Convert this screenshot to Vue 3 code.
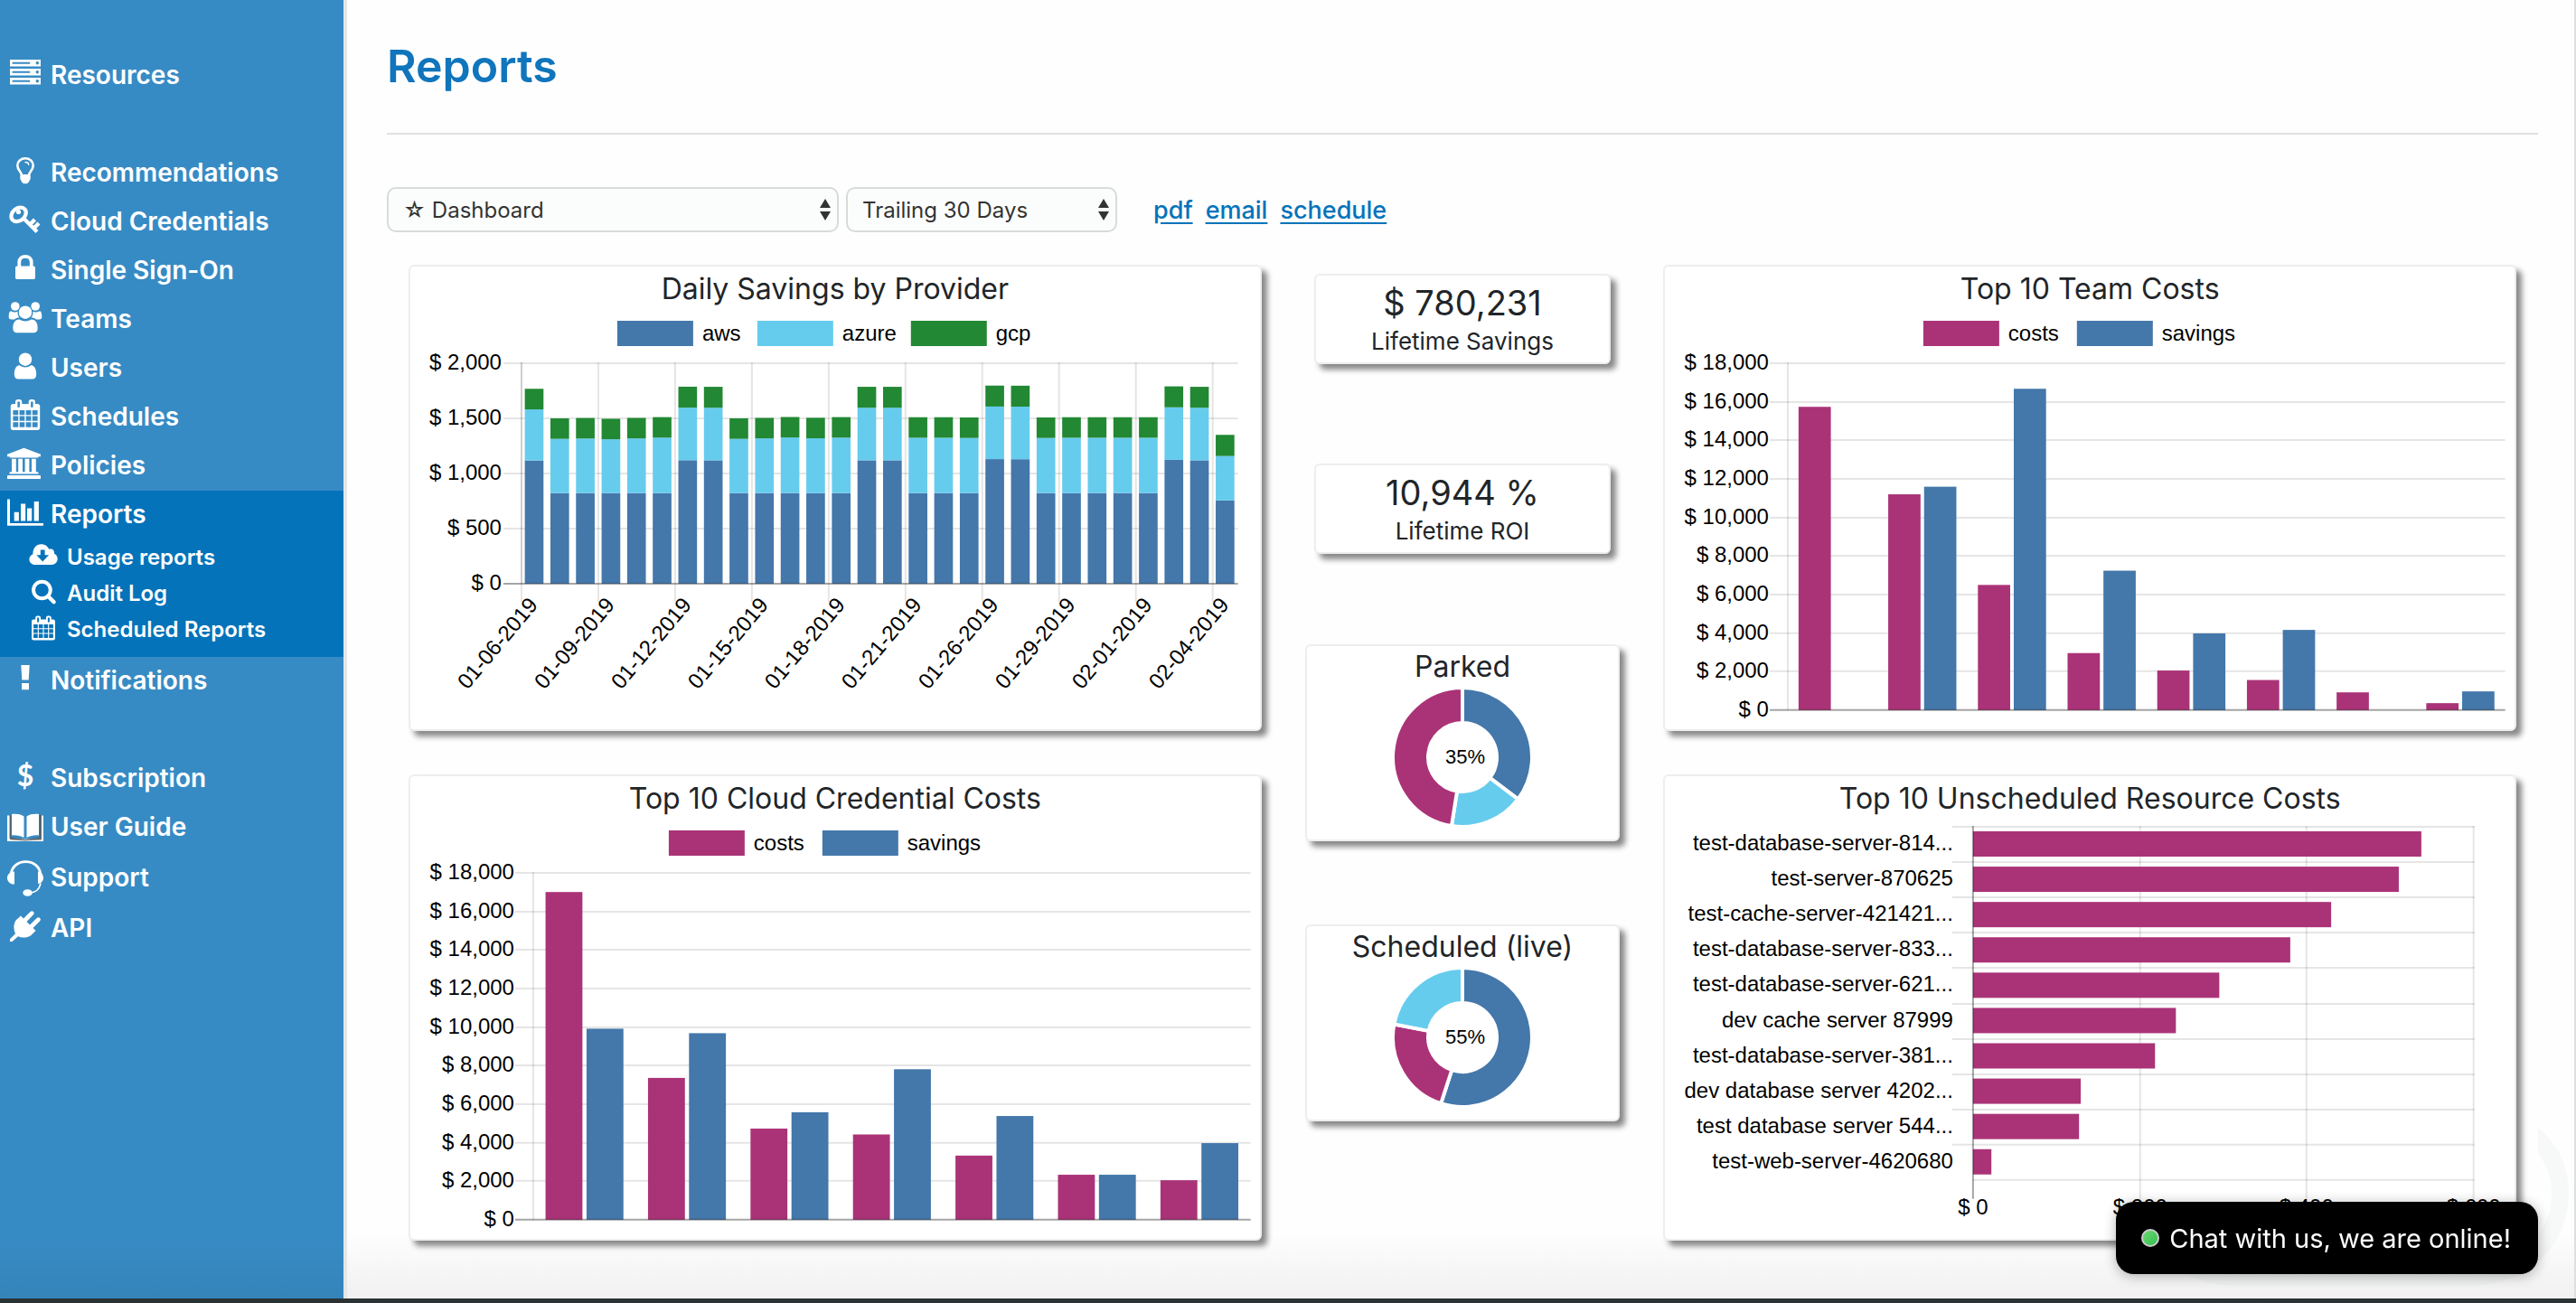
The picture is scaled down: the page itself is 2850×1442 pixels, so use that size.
<script setup>
import { ref } from 'vue'

const BLUE = '#4477aa'
const CYAN = '#66ccee'
const GREEN = '#228833'
const MAGENTA = '#aa3377'

const groups = [
  [{ icon: 'server', label: 'Resources' }],
  [
    { icon: 'bulb', label: 'Recommendations' },
    { icon: 'key', label: 'Cloud Credentials' },
    { icon: 'lock', label: 'Single Sign-On' },
    { icon: 'users', label: 'Teams' },
    { icon: 'user', label: 'Users' },
    { icon: 'calendar', label: 'Schedules' },
    { icon: 'bank', label: 'Policies' },
    {
      icon: 'chart',
      label: 'Reports',
      children: [
        { icon: 'cloud', label: 'Usage reports' },
        { icon: 'search', label: 'Audit Log' },
        { icon: 'calendar', label: 'Scheduled Reports' }
      ]
    },
    { icon: 'bang', label: 'Notifications' }
  ],
  [
    { icon: 'dollar', label: 'Subscription' },
    { icon: 'book', label: 'User Guide' },
    { icon: 'headset', label: 'Support', tall: true },
    { icon: 'plug', label: 'API' }
  ]
]

const icons = {
  server: `<path fill-rule="evenodd" d="M3 5h34v7.4H3zM5.6 7.7v2h19.6v-2zM33.3 7a1.7 1.7 0 1 0 .01 0zM3 15h34v7.4H3zM5.6 17.7v2h19.6v-2zM33.3 17a1.7 1.7 0 1 0 .01 0zM3 25h34v7.4H3zM5.6 27.7v2h19.6v-2zM33.3 27a1.7 1.7 0 1 0 .01 0z"/>`,
  bulb: `<path fill="none" stroke="#fff" stroke-width="2.6" d="M16 25c0-4-4.7-5.500-4.700-11 0-4.600 3.900-7.700 8.700-7.700s8.700 3.100 8.700 7.700c0 5.500-4.700 7-4.700 11"/><path fill="none" stroke="#fff" stroke-width="1.400" stroke-linecap="round" d="M20 10.500c2 0 3.700 1 3.700 2.700"/><path d="M14.700 24h10.600c.8 2.500.6 6-1 7.500-1 2.300-2.500 2.800-4.300 2.800s-3.300-.5-4.300-2.800c-1.600-1.500-1.800-5-1-7.500z"/>`,
  key: `<ellipse cx="12.600" cy="14.400" rx="9" ry="6.800" transform="rotate(-40 12.600 14.400)" fill="none" stroke="#fff" stroke-width="4.200"/><circle cx="12.500" cy="11.500" r="2.600"/><path fill="none" stroke="#fff" stroke-width="4.200" stroke-linecap="square" d="M19 19.500 31.500 32M26 24.500l3-3M30.500 28.500l3-3"/>`,
  lock: `<rect x="9" y="17.500" width="22" height="14.500" rx="1.800"/><path fill="none" stroke="#fff" stroke-width="3.800" d="M13.300 19v-6c0-3.700 3-6.200 6.700-6.200s6.700 2.500 6.700 6.200v6"/>`,
  users: `<circle cx="8.800" cy="8" r="4.800"/><circle cx="31.200" cy="8" r="4.800"/><path d="M4 13.200c3 1.600 5.600 1.500 7.500.6-.2 3 .7 5.200 2 6.700-2.300 0-4 .6-5.300 2H4.500c-2 0-2.800-1-2.800-2.800 0-3 .3-6 2.300-6.500zM36 13.200c-3 1.600-5.600 1.500-7.500.6.2 3-.7 5.200-2 6.700 2.300 0 4 .6 5.300 2h3.700c2 0 2.800-1 2.800-2.800 0-3-.3-6-2.300-6.500z"/><circle cx="20" cy="14.700" r="7.200"/><path d="M13.500 22.500c4 2.600 9 2.600 13 0 5.500 0 7.200 4.500 7.200 10 0 3-1.700 4.800-4.700 4.800H11c-3 0-4.700-1.800-4.700-4.800 0-5.500 1.700-10 7.200-10z"/>`,
  user: `<circle cx="20" cy="12.700" r="7.200"/><path d="M13.800 19.200c3.800 3 8.600 3 12.400 0 4.700.3 6 5.500 6 10 0 3.300-1.700 5.300-4.500 5.300H12.300c-2.800 0-4.500-2-4.500-5.300 0-4.500 1.300-9.700 6-10z"/>`,
  calendar: `<path fill-rule="evenodd" d="M6.500 8H9V5.500C9 4 10.400 3 12 3h1.500c1.600 0 2.800 1 2.800 2.500V8h7.400V5.500C23.700 4 24.900 3 26.500 3H28c1.600 0 3 1 3 2.500V8h2.500c1.600 0 2.700 1 2.700 2.500V34.500c0 1.500-1.100 2.500-2.700 2.500h-27c-1.600 0-2.700-1-2.700-2.500v-24C3.800 9 4.900 8 6.500 8zM11.400 5.500v6.300h2.500V5.500zM26.100 5.500v6.300h2.500V5.500zM6.400 15v5.200h5.800V15zm7.200 0v5.200h5.700V15zm7.100 0v5.200h5.700V15zm7.100 0v5.200h5.800V15zM6.400 21.500v5.300h5.800v-5.300zm7.200 0v5.300h5.700v-5.300zm7.100 0v5.300h5.700v-5.300zm7.100 0v5.300h5.800v-5.300zM6.400 28.200v5.500h5.800v-5.500zm7.200 0v5.500h5.700v-5.500zm7.100 0v5.500h5.700v-5.500zm7.100 0v5.500h5.800v-5.500z"/>`,
  bank: `<path d="M18.500 2.800 37 9.800v2.400h-2.400c0 1-.6 1.300-1.500 1.300H4c-.9 0-1.500-.4-1.500-1.300H0V9.800zM5 14.700h4.800v14.600h2.400V14.700H17v14.600h2.600V14.700h4.800v14.600H27V14.700h4.800v14.600h1.400c.8 0 1.300.5 1.300 1.200v1H2.500v-1c0-.7.5-1.200 1.300-1.200H5zM1.300 33h34.500c.7 0 1.200.5 1.200 1.200V37H0v-2.800C0 33.500.6 33 1.300 33z"/>`,
  chart: `<path d="M0 5.400h3v26.500h37v2.800H0zM7.700 19.800h5.200v9.700H7.700zM15 10.500h5.200v19H15zM22 15.500h5.200v14H22zM29.700 8h5.200v21.500h-5.200z"/>`,
  cloud: `<path fill-rule="evenodd" d="M8.500 32.500C4 32.500.5 29.300.5 25c0-3.500 2-6 5-7.200C5.300 9.700 10 4 17 4c5 0 9 2.600 10.700 7 4.300-1.400 8 1.200 7.300 6.200 3 1 4.600 4 4.600 7.300 0 4.500-3.500 8-8 8zM16 12v7h-5.500l8.500 9 8.500-9H22v-7z"/>`,
  search: `<circle cx="18" cy="17.500" r="11.700" fill="none" stroke="#fff" stroke-width="5"/><path stroke="#fff" stroke-width="5.500" stroke-linecap="round" d="m26.500 26 8 8"/>`,
  bang: `<path d="M15.300 5h9.400l-1 16.500h-7.400zM16 25h8v7.200h-8z"/>`,
  dollar: `<text x="20" y="31" text-anchor="middle" font-size="32" font-weight="700" font-family="Lato, sans-serif">$</text>`,
  book: `<path d="M0 9.500h2.500V35.500h17.500 17.500V9.500H40V38H0z"/><path fill="#555" d="M3 9h1.500v24.500L20 36l15.500-2.500V9H38v27.500l-18 1-16-1-1-1z" opacity=".75"/><path d="M5 8c5-.5 10 0 13.500 2.500v23.500C14 32 10 31 5 31.500zM35 8c-5-.5-10 0-13.500 2.500v23.500c4.500-2 8.500-3 13.500-2.500z"/>`,
  headset: `<path fill="none" stroke="#fff" stroke-width="2.800" d="M4 16C5 7 12 1.600 20.500 1.600S36 7 37 16"/><path d="M8 12.500v14C3.500 27 0 23.500 0 19.500S3.500 12.500 8 12.500zM34 12.500v13.500c3.500 0 6-3 6-6.500s-2.500-7-6-7z"/><path fill="none" stroke="#fff" stroke-width="1.700" d="M37 25.500c-1.500 7-5 10.300-13 10.700"/><ellipse cx="22.500" cy="36" rx="5.200" ry="3.800"/>`,
  plug: `<path d="M9.500 13.500 15 8.500l3 3 7.500-7.500c2.300-2.300 5.700.8 3.400 3.300L21.500 15l3.500 3.500 7.700-7.500c2.500-2.200 5.700 1 3.300 3.400L28.500 22l3 3-5 5c-5.500 3.700-11 2.700-14.500 1.200L5.500 37H3v-2.800l6-6c-2-4.500-2.500-9.500.5-14.700z"/>`
}

const report = ref('dashboard')
const period = ref('30')

const kpis = [
  { value: '$ 780,231', label: 'Lifetime Savings' },
  { value: '10,944 %', label: 'Lifetime ROI' }
]

const polar = (cx, cy, r, share) => {
  const a = share * 2 * Math.PI
  return `${(cx + r * Math.sin(a)).toFixed(2)} ${(cy - r * Math.cos(a)).toFixed(2)}`
}
const slice = (from, to) => {
  const large = to - from > 0.5 ? 1 : 0
  return `M${polar(77, 77, 77, from)}A77 77 0 ${large} 1 ${polar(77, 77, 77, to)}L${polar(77, 77, 38, to)}A38 38 0 ${large} 0 ${polar(77, 77, 38, from)}Z`
}
const donuts = [
  {
    title: 'Parked',
    text: '35%',
    slices: [
      { d: slice(0, 0.353), color: BLUE },
      { d: slice(0.353, 0.525), color: CYAN },
      { d: slice(0.525, 1), color: MAGENTA }
    ]
  },
  {
    title: 'Scheduled (live)',
    text: '55%',
    slices: [
      { d: slice(0, 0.55), color: BLUE },
      { d: slice(0.55, 0.78), color: MAGENTA },
      { d: slice(0.78, 1), color: CYAN }
    ]
  }
]

const money = (n) => '$ ' + n.toLocaleString('en-US')

// Daily savings: running totals of aws, aws + azure, aws + azure + gcp
const low = (total) => [822, total - 186, total]
const high = (total) => [total - 667, total - 190, total]
const days = [
  [1118, 1581, 1768], low(1500), low(1503), low(1496), low(1504), low(1511),
  high(1787), high(1786), low(1500), low(1504), low(1512), low(1505), low(1511),
  high(1786), high(1786), low(1510), low(1510), low(1508),
  high(1797), high(1796), low(1508), low(1510), low(1510), low(1510), low(1510),
  high(1790), high(1786), [755, 1158, 1350]
]
const dayWidth = 793 / days.length
const daily = {
  legend: [
    { label: 'aws', color: BLUE, x: 229 },
    { label: 'azure', color: CYAN, x: 384 },
    { label: 'gcp', color: GREEN, x: 554 }
  ],
  ticks: [2000, 1500, 1000, 500, 0].map((v, i) => ({ label: money(v), y: 57 + i * 61 })),
  bars: days.flatMap((totals, i) =>
    [0, 1, 2].map((k) => {
      const base = k ? totals[k - 1] : 0
      return {
        x: 123 + dayWidth * (i + 0.13),
        y: 301 - totals[k] * 0.122,
        w: dayWidth * 0.73,
        h: (totals[k] - base) * 0.122,
        color: [BLUE, CYAN, GREEN][k]
      }
    })
  ),
  dates: ['01-06-2019', '01-09-2019', '01-12-2019', '01-15-2019', '01-18-2019', '01-21-2019', '01-26-2019', '01-29-2019', '02-01-2019', '02-04-2019'].map(
    (label, i) => ({ label, x: Math.round(123 + i * 3 * dayWidth) })
  )
}

const paired = (title, costs, savings) => {
  const cat = 794 / costs.length
  const scale = 384 / 18000
  const column = (v, i, k) => ({
    x: 136 + cat * (i + 0.12 + k * 0.4),
    y: 441 - v * scale,
    w: cat * 0.36,
    h: v * scale,
    color: k ? BLUE : MAGENTA
  })
  return {
    title,
    bars: [...costs.map((v, i) => column(v, i, 0)), ...savings.map((v, i) => column(v, i, 1))]
  }
}
const pairTicks = Array.from({ length: 10 }, (_, i) => ({
  label: money(18000 - i * 2000),
  y: Math.round(57 + (i * 384) / 9)
}))
const pairLegend = [
  { label: 'costs', color: MAGENTA, x: 286 },
  { label: 'savings', color: BLUE, x: 456 }
]
const credentials = paired(
  'Top 10 Cloud Credential Costs',
  [17006, 7360, 4730, 4425, 3328, 2334, 2050],
  [9914, 9680, 5578, 7809, 5381, 2334, 3975]
)
const teams = paired(
  'Top 10 Team Costs',
  [15737, 11198, 6495, 2958, 2053, 1561, 920, 360],
  [0, 11592, 16674, 7235, 3980, 4160, 0, 970]
)

const resources = [
  ['test-database-server-814...', 537],
  ['test-server-870625', 510],
  ['test-cache-server-421421...', 429],
  ['test-database-server-833...', 380],
  ['test-database-server-621...', 295],
  ['dev cache server 87999', 243],
  ['test-database-server-381...', 218],
  ['dev database server 4202...', 129],
  ['test database server 544...', 127],
  ['test-web-server-4620680', 22]
].map(([label, value], i) => ({ label, w: value * 0.924, y: 6 + i * 39.1 }))
const resourceTicks = [0, 200, 400, 600].map((v, i) => ({ label: money(v), x: Math.round(341 + i * 184.7) }))
</script>

<template>
  <div class="page">
    <div class="body">
      <nav class="sidebar" aria-label="Main">
        <ul v-for="(group, g) in groups" :key="g" class="group">
          <li v-for="item in group" :key="item.label" :class="{ active: item.children }">
            <a href="#" class="item" :class="{ tall: item.tall }">
              <svg class="icon" viewBox="0 0 40 40" aria-hidden="true" v-html="icons[item.icon]"></svg>
              <span>{{ item.label }}</span>
            </a>
            <ul v-if="item.children" class="sub">
              <li v-for="child in item.children" :key="child.label">
                <a href="#" class="subitem">
                  <svg class="icon" viewBox="0 0 40 40" aria-hidden="true" v-html="icons[child.icon]"></svg>
                  <span>{{ child.label }}</span>
                </a>
              </li>
            </ul>
          </li>
        </ul>
      </nav>

      <main class="main">
        <svg class="watermark" viewBox="0 0 440 180" aria-hidden="true">
          <path d="M10 161Q38 178 72 178H330C395 178 440 133 440 75 440 44 427 20 406 3V31C416 45 421 60 421 75 421 120 385 158 330 158H72Z" />
        </svg>

        <header class="header"><h1>Reports</h1></header>
        <hr class="rule" />

        <form class="toolbar" @submit.prevent>
          <div class="select report">
            <select v-model="report" aria-label="Report">
              <option value="dashboard">☆ Dashboard</option>
            </select>
            <svg viewBox="0 0 12 24" aria-hidden="true"><path d="M6 0l6 10H0zM6 24l6-10H0z" /></svg>
          </div>
          <div class="select period">
            <select v-model="period" aria-label="Period">
              <option value="30">Trailing 30 Days</option>
            </select>
            <svg viewBox="0 0 12 24" aria-hidden="true"><path d="M6 0l6 10H0zM6 24l6-10H0z" /></svg>
          </div>
          <div class="links">
            <a href="#">pdf</a>
            <a href="#">email</a>
            <a href="#">schedule</a>
          </div>
        </form>

        <div class="grid">
          <div class="column">
            <section class="card">
              <h2>Daily Savings by Provider</h2>
              <svg class="plot" viewBox="0 0 940 462" role="img" aria-label="Daily Savings by Provider">
                <g v-for="l in daily.legend" :key="l.label">
                  <rect :x="l.x" y="10" width="84" height="28" :fill="l.color" />
                  <text :x="l.x + 94" y="32">{{ l.label }}</text>
                </g>
                <g v-for="t in daily.ticks" :key="t.label">
                  <line x1="103" x2="916" :y1="t.y" :y2="t.y" class="gridline" />
                  <text x="101" :y="t.y + 7" text-anchor="end">{{ t.label }}</text>
                </g>
                <line v-for="d in daily.dates" :key="d.label" :x1="d.x" :x2="d.x" y1="56" y2="321" class="gridline" />
                <rect v-for="(b, i) in daily.bars" :key="i" :x="b.x" :y="b.y" :width="b.w" :height="b.h" :fill="b.color" />
                <line x1="123" x2="123" y1="56" y2="301" class="gridline" />
                <line x1="103" x2="916" y1="301" y2="301" class="zeroline" />
                <text v-for="d in daily.dates" :key="d.label" :transform="`translate(${d.x + 13} 320) rotate(-50)`" y="8" text-anchor="end">{{ d.label }}</text>
              </svg>
            </section>
            <section class="card">
              <h2>{{ credentials.title }}</h2>
              <svg class="plot" viewBox="0 0 940 462" role="img" :aria-label="credentials.title">
                <g v-for="l in pairLegend" :key="l.label">
                  <rect :x="l.x" y="10" width="84" height="28" :fill="l.color" />
                  <text :x="l.x + 94" y="32">{{ l.label }}</text>
                </g>
                <g v-for="t in pairTicks" :key="t.label">
                  <line x1="116" x2="930" :y1="t.y" :y2="t.y" class="gridline" />
                  <text x="115" :y="t.y + 7" text-anchor="end">{{ t.label }}</text>
                </g>
                <line x1="136" x2="136" y1="56" y2="441" class="gridline" />
                <rect v-for="(b, i) in credentials.bars" :key="i" :x="b.x" :y="b.y" :width="b.w" :height="b.h" :fill="b.color" />
                <line x1="116" x2="930" y1="441" y2="441" class="zeroline" />
              </svg>
            </section>
          </div>

          <div class="column middle">
            <section v-for="k in kpis" :key="k.label" class="card kpi">
              <p class="value">{{ k.value }}</p>
              <p class="caption">{{ k.label }}</p>
            </section>
            <section v-for="d in donuts" :key="d.title" class="card donut">
              <h2>{{ d.title }}</h2>
              <svg viewBox="0 0 154 154" role="img" :aria-label="d.title">
                <path v-for="(s, i) in d.slices" :key="i" :d="s.d" :fill="s.color" stroke="#fff" stroke-width="4" />
                <text x="80" y="84" text-anchor="middle">{{ d.text }}</text>
              </svg>
            </section>
          </div>

          <div class="column">
            <section class="card">
              <h2>{{ teams.title }}</h2>
              <svg class="plot" viewBox="0 0 940 462" role="img" :aria-label="teams.title">
                <g v-for="l in pairLegend" :key="l.label">
                  <rect :x="l.x" y="10" width="84" height="28" :fill="l.color" />
                  <text :x="l.x + 94" y="32">{{ l.label }}</text>
                </g>
                <g v-for="t in pairTicks" :key="t.label">
                  <line x1="116" x2="930" :y1="t.y" :y2="t.y" class="gridline" />
                  <text x="115" :y="t.y + 7" text-anchor="end">{{ t.label }}</text>
                </g>
                <line x1="136" x2="136" y1="56" y2="441" class="gridline" />
                <rect v-for="(b, i) in teams.bars" :key="i" :x="b.x" :y="b.y" :width="b.w" :height="b.h" :fill="b.color" />
                <line x1="116" x2="930" y1="441" y2="441" class="zeroline" />
              </svg>
            </section>
            <section class="card">
              <h2>Top 10 Unscheduled Resource Costs</h2>
              <svg class="plot" viewBox="0 0 940 462" role="img" aria-label="Top 10 Unscheduled Resource Costs">
                <g v-for="t in resourceTicks" :key="t.label">
                  <line :x1="t.x" :x2="t.x" y1="5" y2="418" class="gridline" />
                  <text :x="t.x" y="435" text-anchor="middle">{{ t.label }}</text>
                </g>
                <g v-for="r in resources" :key="r.label">
                  <line x1="318" x2="896" :y1="Math.round(r.y)" :y2="Math.round(r.y)" class="gridline" />
                  <rect x="341" :y="r.y + 5" :width="r.w" height="28" :fill="MAGENTA" />
                  <text x="319" :y="Math.round(r.y + 26)" text-anchor="end">{{ r.label }}</text>
                </g>
                <line x1="341" x2="896" y1="397" y2="397" class="gridline" />
                <line x1="341" x2="341" y1="5" y2="418" class="zeroline" />
              </svg>
            </section>
          </div>
        </div>
      </main>
    </div>
    <footer class="footer"></footer>
    <button type="button" class="chat"><span class="dot"></span>Chat with us, we are online!</button>
  </div>
</template>

<style>
body {
  background: #fefefe;
}
</style>

<style scoped>
.page {
  display: flex;
  flex-direction: column;
  min-height: 100vh;
  font-family: Inter, "Open Sans", sans-serif;
  color: #212529;
}
.body {
  display: flex;
  flex: 1;
}
.sidebar {
  flex: none;
  width: 380px;
  border-right: 4px solid #e4e6e8;
  background: linear-gradient(to top, rgba(0, 0, 0, 0.05), transparent 70px), #378bc4;
  padding-top: 57px;
}
ul {
  list-style: none;
  margin: 0;
  padding: 0;
}
.group {
  margin-bottom: 54px;
}
.active {
  background: #0473ba;
  padding-bottom: 10px;
}
.item,
.subitem {
  display: flex;
  align-items: center;
  color: #fff;
  text-decoration: none;
  font-weight: 600;
}
.item {
  height: 54px;
  padding-left: 8px;
  gap: 8px;
  font-size: 28px;
}
.item.tall {
  height: 58px;
}
.subitem {
  height: 40px;
  padding-left: 32px;
  gap: 10px;
  font-size: 24px;
}
.item span,
.subitem span {
  padding-bottom: 2px;
}
.icon {
  flex: none;
  fill: #fff;
  overflow: visible;
}
.item .icon {
  width: 40px;
  height: 40px;
  margin-bottom: 6px;
}
.item.tall .icon {
  margin-bottom: 0;
}
.subitem .icon {
  width: 32px;
  height: 32px;
  margin-bottom: 4px;
}
.main {
  position: relative;
  flex: 1;
  min-width: 0;
  padding: 43px 40px 64px 44px;
  border-right: 2px solid #dfdfdf;
  background: linear-gradient(to top, #f0f0f0, #fefefe 72px);
}
.watermark {
  position: absolute;
  right: 6px;
  bottom: 12px;
  width: 440px;
  height: 180px;
  fill: rgba(210, 225, 220, 0.16);
}
h1 {
  margin: 0;
  font-size: 50px;
  line-height: 60px;
  font-weight: 600;
  color: #1075bc;
}
.rule {
  margin: 44px 0 58px;
  border: 0;
  height: 2px;
  background: #dee0e1;
}
.toolbar {
  display: flex;
  align-items: center;
  gap: 8px;
  margin-bottom: 36px;
}
.select {
  position: relative;
}
.select.report {
  width: 500px;
}
.select.period {
  width: 300px;
}
.select select {
  display: block;
  width: 100%;
  height: 50px;
  padding: 0 40px 0 16px;
  border: 2px solid #d8dbdb;
  border-radius: 10px;
  background: #fbfdfc;
  color: #333;
  font-family: Inter, "DejaVu Sans", sans-serif;
  font-size: 24px;
  appearance: none;
}
.select svg {
  position: absolute;
  right: 9px;
  top: 13px;
  width: 12px;
  height: 24px;
  fill: #333;
  pointer-events: none;
}
.links {
  display: flex;
  gap: 14px;
  margin-left: 32px;
  font-size: 27px;
  font-weight: 500;
}
.links a {
  color: #0473ba;
  text-underline-offset: 4px;
}
.grid {
  position: relative;
  display: grid;
  grid-template-columns: 5fr 2fr 5fr;
}
.column {
  display: flex;
  flex-direction: column;
  gap: 48px;
  min-width: 0;
  padding: 0 24px;
}
.card {
  border: 2px solid #eee;
  border-radius: 6px;
  background: #fff;
  box-shadow: 6px 6px 6px #888;
  text-align: center;
}
h2 {
  margin: 0;
  padding: 2px 0;
  font-size: 32px;
  line-height: 46px;
  font-weight: 400;
}
.plot {
  display: block;
  width: 100%;
  height: auto;
}
svg text {
  font-family: "Liberation Sans", Arial, sans-serif;
}
.plot text {
  font-size: 24px;
  fill: #000;
}
.gridline {
  stroke: rgba(0, 0, 0, 0.1);
  stroke-width: 2;
}
.zeroline {
  stroke: rgba(0, 0, 0, 0.28);
  stroke-width: 2;
}
.middle {
  gap: 0;
  padding-top: 10px;
}
.kpi {
  margin: 0 10px 110px;
  padding: 6px 0 8px;
}
.kpi + .donut {
  margin-top: -10px;
}
.kpi p {
  margin: 0;
}
.value {
  font-size: 38px;
  line-height: 48px;
}
.caption {
  margin-top: 4px;
  font-size: 26px;
  line-height: 30px;
  padding-top: 4px;
}
.donut {
  margin-bottom: 92px;
  padding-bottom: 14px;
}
.donut h2 {
  line-height: 42px;
}
.donut svg {
  display: block;
  width: 154px;
  height: 154px;
  margin: 0 auto;
}
.donut text {
  font-size: 22px;
  fill: #000;
}
.footer {
  height: 5px;
  background: #2a3233;
}
.chat {
  position: fixed;
  right: 42px;
  bottom: 32px;
  display: flex;
  align-items: center;
  gap: 11px;
  height: 80px;
  padding: 0 30px 0 28px;
  border: 0;
  border-radius: 20px;
  background: #000;
  box-shadow: 0 2px 14px rgba(0, 0, 0, 0.3);
  color: #fff;
  font-family: Inter, sans-serif;
  font-size: 29px;
  font-weight: 400;
}
.dot {
  box-sizing: border-box;
  width: 20px;
  height: 20px;
  border: 2px solid #ccc;
  border-radius: 50%;
  background: linear-gradient(135deg, #6fd873, #2fc14c);
}
</style>
